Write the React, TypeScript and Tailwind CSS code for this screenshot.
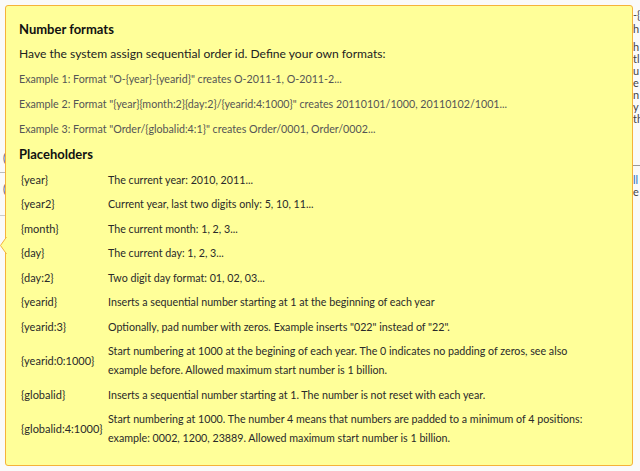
import React from "react";

const rows: { k: string; d: React.ReactNode }[] = [
  { k: "{year}", d: "The current year: 2010, 2011..." },
  { k: "{year2}", d: "Current year, last two digits only: 5, 10, 11..." },
  { k: "{month}", d: "The current month: 1, 2, 3..." },
  { k: "{day}", d: "The current day: 1, 2, 3..." },
  { k: "{day:2}", d: "Two digit day format: 01, 02, 03..." },
  { k: "{yearid}", d: "Inserts a sequential number starting at 1 at the beginning of each year" },
  { k: "{yearid:3}", d: 'Optionally, pad number with zeros. Example inserts "022" instead of "22".' },
  {
    k: "{yearid:0:1000}",
    d: (
      <>
        Start numbering at 1000 at the begining of each year. The 0 indicates no padding of zeros, see also
        <br />
        example before. Allowed maximum start number is 1 billion.
      </>
    ),
  },
  { k: "{globalid}", d: "Inserts a sequential number starting at 1. The number is not reset with each year." },
  {
    k: "{globalid:4:1000}",
    d: (
      <>
        Start numbering at 1000. The number 4 means that numbers are padded to a minimum of 4 positions:
        <br />
        example: 0002, 1200, 23889. Allowed maximum start number is 1 billion.
      </>
    ),
  },
];

export default function App() {
  return (
    <div
      className="relative w-[640px] h-[471px] overflow-hidden bg-[#fafafa] text-[#333]"
      style={{ fontFamily: "Lato, 'Liberation Sans', sans-serif" }}
    >
      {/* background page (mostly hidden) */}
      <div className="flex h-full text-[11px] leading-[12px] text-[#444]">
        <div className="w-[6px] overflow-hidden pt-[152px] flex flex-col items-end">
          <div className="text-[#557]">(</div>
          <div className="mt-[8px] w-full border-t border-[#bbb]" />
          <div className="mt-[10px] text-[#557]">(</div>
          <div className="mt-[20px] w-full border-t border-[#ccc]" />
        </div>
        <div className="flex-1" />
        <div className="w-[7px] overflow-hidden pt-[9px] whitespace-nowrap">
          <div>-{"{"}</div>
          <div className="mt-[2px]">h</div>
          <div className="mt-[6px]">h</div>
          <div>tl</div>
          <div>u</div>
          <div>e</div>
          <div>n</div>
          <div>y</div>
          <div>th</div>
          <div className="mt-[40px] w-full border-t border-[#999]" />
          <div className="mt-[8px] text-[#2a6ebb]">ll</div>
          <div>e</div>
        </div>
      </div>

      {/* tooltip */}
      <div className="absolute left-[5px] top-[5px] w-[628px] h-[461px] rounded-[3px] border border-[#f5b23a] bg-[#ffff99] pl-[13px] pr-[12px] pt-[14px]">
        <div className="text-[13px] leading-[18px] font-bold text-[#111]">Number formats</div>
        <div className="mt-[7px] text-[12.1px] leading-[18px] text-[#222]">
          Have the system assign sequential order id. Define your own formats:
        </div>
        <div className="mt-[7px] text-[10.7px] leading-[18px] text-[#555]">
          Example 1: Format "O-{"{year}"}-{"{yearid}"}" creates O-2011-1, O-2011-2...
        </div>
        <div className="mt-[7px] text-[10.7px] leading-[18px] text-[#555]">
          Example 2: Format "{"{year}{month:2}{day:2}/{yearid:4:1000}"}" creates 20110101/1000, 20110102/1001...
        </div>
        <div className="mt-[7px] text-[10.7px] leading-[18px] text-[#555]">
          Example 3: Format "Order/{"{globalid:4:1}"}" creates Order/0001, Order/0002...
        </div>
        <div className="mt-[7px] text-[13px] leading-[18px] font-bold text-[#111]">Placeholders</div>
        <table className="mt-[4px] border-collapse leading-[19px] text-[#2a2a2a]">
          <tbody>
            {rows.map((r) => (
              <tr key={r.k}>
                <td className="w-[89px] pl-[2px] py-[2.75px] align-middle whitespace-nowrap text-[11px]">{r.k}</td>
                <td className="py-[2.75px] align-middle whitespace-nowrap text-[10.7px]">{r.d}</td>
              </tr>
            ))}
          </tbody>
        </table>
      </div>
      {/* arrow */}
      <svg className="absolute left-0 top-[237px]" width="7" height="17" viewBox="0 0 7 17">
        <path d="M6.5 0 L0.5 8.5 L6.5 17" fill="#ffff99" stroke="#f5b23a" strokeWidth="1" />
      </svg>
    </div>
  );
}
